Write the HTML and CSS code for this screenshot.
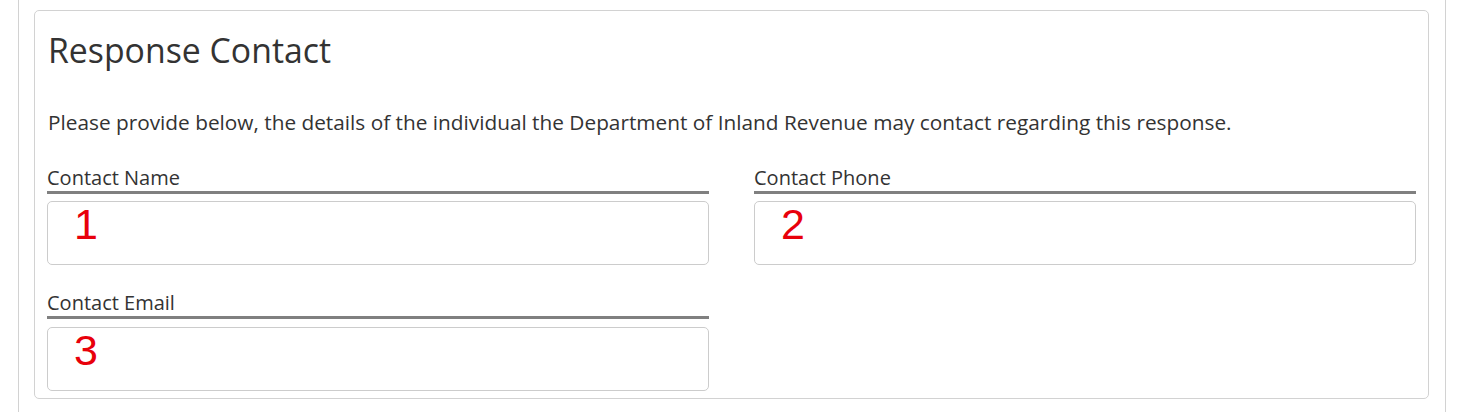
FILE: index.html
```html
<!doctype html>
<html lang="en">
<head>
	<meta charset="UTF-8"/>
	<title>Response Contact</title>
	<link rel="stylesheet" href="styles.css">
</head>
<body>
	<div class="page">
		<div class="panel">
			<h1 class="title">Response Contact</h1>
			<p class="intro">Please provide below, the details of the individual the Department of Inland Revenue may contact regarding this response.</p>

			<div class="fields">
				<div class="field">
					<label class="fieldLabel">Contact Name</label>
					<div class="fieldBox"><span class="mark">1</span></div>
				</div>
				<div class="field">
					<label class="fieldLabel">Contact Phone</label>
					<div class="fieldBox"><span class="mark">2</span></div>
				</div>
				<div class="field">
					<label class="fieldLabel">Contact Email</label>
					<div class="fieldBox"><span class="mark">3</span></div>
				</div>
			</div>
		</div>
	</div>
</body>
</html>
```

FILE: styles.css
```css
*				{ padding:0; margin:0; box-sizing:border-box; }
html, body		{ background:#fff; }
body			{ font-family:"Open Sans", "Noto Sans", sans-serif; color:#333; }
.page			{ margin:0 13px 0 18px; min-height:412px; padding:10px 16px 0 15px; border-left:1px solid #d2d2d2; border-right:1px solid #d2d2d2; }
.panel			{ border:1px solid #d2d2d2; border-radius:5px; padding:0 12px 7px 12px; }
.title			{ font-size:33.8px; font-weight:400; line-height:40px; margin:19px 0 0 1px; }
.intro			{ font-size:20.8px; line-height:28px; margin:38px 0 0 1px; }
.fields			{ display:grid; grid-template-columns:1fr 1fr; column-gap:45px; row-gap:24px; margin-top:28px; }
.field:nth-child(3) .fieldBox	{ margin-top:8px; }
.fieldLabel		{ display:block; font-size:20px; line-height:27px; border-bottom:3px solid #808080; }
.fieldBox		{ height:64px; margin-top:7px; border:1px solid #ccc; border-radius:5px; padding:0 0 0 26px; }
.mark			{ font-family:"Liberation Sans", Arial, sans-serif; font-size:43px; line-height:45px; color:#e8000b; }
```
